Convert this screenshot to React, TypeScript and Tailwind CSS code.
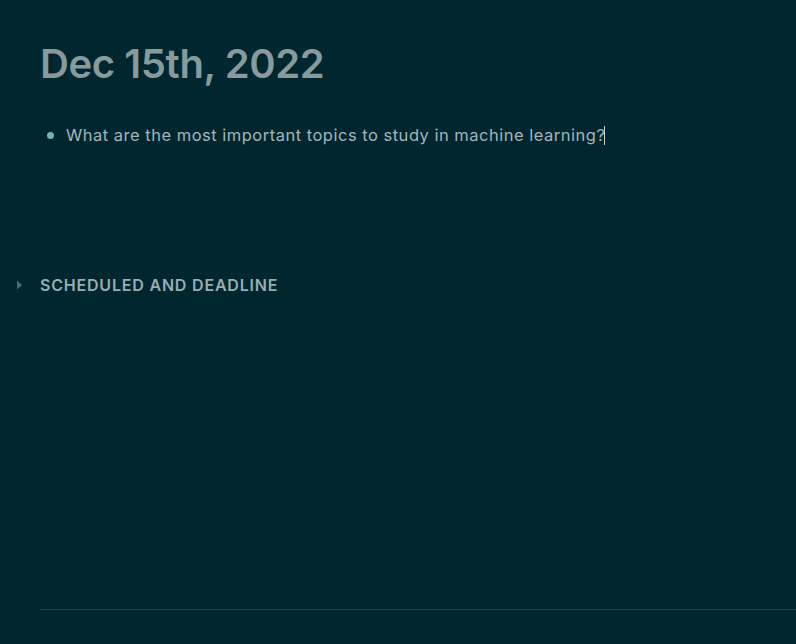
export default function App() {
  return (
    <div className="h-[644px] w-[796px] overflow-hidden bg-[#002630] font-['Inter',sans-serif]">
      <div className="pl-10 pt-[40px]">
        <h1 className="text-[40px] font-semibold leading-[48px] tracking-[-0.4px] text-[#879a9c]">Dec 15th, 2022</h1>
        <div className="mt-[35px] flex items-center">
          <span className="ml-[7px] mr-[12px] h-[7px] w-[7px] rounded-full bg-[#76b2ad]" />
          <span className="text-[16.5px] leading-[24px] tracking-[0.5px] text-[#a4b5b7]">
            What are the most important topics to study in machine learning?
          </span>
          <span className="-ml-[1px] h-[19px] w-px bg-[#c8d4d5]" />
        </div>
      </div>
      <div className="mt-[126px] flex items-center">
        <svg width="40" height="12" viewBox="0 0 40 12" className="shrink-0">
          <path d="M17 1.5 L22 6 L17 10.5 Z" fill="#4d6b70" />
        </svg>
        <span className="text-[16px] font-semibold leading-[24px] tracking-[0.8px] text-[#9aadb0]">SCHEDULED AND DEADLINE</span>
      </div>
      <div className="ml-10 mt-[312px] h-px bg-[#1a4a54]" />
    </div>
  )
}
